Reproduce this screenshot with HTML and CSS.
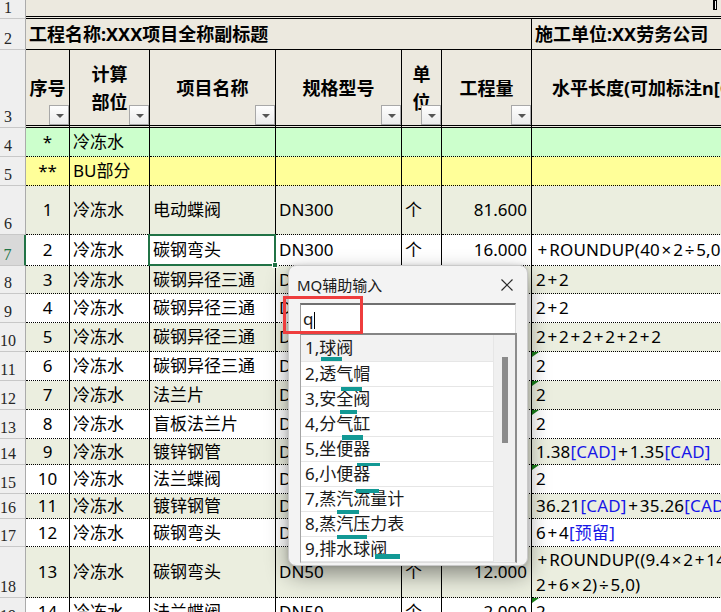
FILE: index.html
```html
<!DOCTYPE html>
<html lang="zh-CN">
<head>
<meta charset="utf-8">
<title>MQ辅助输入</title>
<link rel="stylesheet" href="styles.css">
</head>
<body>
<table class="sheet">
<colgroup>
<col class="w-rh"><col class="w-a"><col class="w-b"><col class="w-c"><col class="w-d"><col class="w-e"><col class="w-f"><col class="w-g">
</colgroup>
<tbody>
<tr class="h18"><td class="rh">1</td><td class="hd row1" colspan="7"><span class="mark"></span></td></tr>
<tr class="h31"><td class="rh">2</td><td class="hd row2" colspan="6">工程名称:XXX项目全称副标题</td><td class="hd row2">施工单位:XX劳务公司</td></tr>
<tr class="h78"><td class="rh">3</td>
<td class="hd row3">序号<span class="fb"></span></td>
<td class="hd row3">计算<br>部位<span class="fb"></span></td>
<td class="hd row3">项目名称<span class="fb"></span></td>
<td class="hd row3">规格型号<span class="fb"></span></td>
<td class="hd row3">单<br>位<span class="fb"></span></td>
<td class="hd row3">工程量<span class="fb"></span></td>
<td class="hd row3 gh">水平长度(可加标注n[CAD]/[预留])</td></tr>

<tr class="h29 g"><td class="rh">4</td><td class="c">*</td><td>冷冻水</td><td></td><td></td><td></td><td></td><td class="gx"></td></tr>
<tr class="h29 y"><td class="rh">5</td><td class="c">**</td><td>BU部分</td><td></td><td></td><td></td><td></td><td class="gx"></td></tr>
<tr class="h49 t"><td class="rh">6</td><td class="c">1</td><td>冷冻水</td><td>电动蝶阀</td><td>DN300</td><td>个</td><td class="r">81.600</td><td class="gx"></td></tr>
<tr class="h31 w"><td class="rh sel-rh">7</td><td class="c">2</td><td>冷冻水</td><td class="sel">碳钢弯头<span class="handle"></span></td><td>DN300</td><td>个</td><td class="r">16.000</td><td class="gx"><span class="op">+</span>ROUNDUP(40<span class="op">×</span>2<span class="op">÷</span>5,0)</td></tr>
<tr class="h28 t"><td class="rh">8</td><td class="c">3</td><td>冷冻水</td><td>碳钢异径三通</td><td>DN300×250</td><td>个</td><td class="r">4.000</td><td class="gx">2<span class="op">+</span>2</td></tr>
<tr class="h29 w"><td class="rh">9</td><td class="c">4</td><td>冷冻水</td><td>碳钢异径三通</td><td>DN250×200</td><td>个</td><td class="r">4.000</td><td class="gx">2<span class="op">+</span>2</td></tr>
<tr class="h29 t"><td class="rh">10</td><td class="c">5</td><td>冷冻水</td><td>碳钢异径三通</td><td>DN200×150</td><td>个</td><td class="r">12.000</td><td class="gx">2<span class="op">+</span>2<span class="op">+</span>2<span class="op">+</span>2<span class="op">+</span>2<span class="op">+</span>2</td></tr>
<tr class="h29 w"><td class="rh">11</td><td class="c">6</td><td>冷冻水</td><td>碳钢异径三通</td><td>DN150×100</td><td>个</td><td class="r">2.000</td><td class="gx cm">2</td></tr>
<tr class="h29 t"><td class="rh">12</td><td class="c">7</td><td>冷冻水</td><td>法兰片</td><td>DN100</td><td>片</td><td class="r">2.000</td><td class="gx cm">2</td></tr>
<tr class="h29 w"><td class="rh">13</td><td class="c">8</td><td>冷冻水</td><td>盲板法兰片</td><td>DN100</td><td>片</td><td class="r">2.000</td><td class="gx cm">2</td></tr>
<tr class="h26 t"><td class="rh">14</td><td class="c">9</td><td>冷冻水</td><td>镀锌钢管</td><td>DN80</td><td>m</td><td class="r">2.730</td><td class="gx">1.38<span class="b">[CAD]</span><span class="op">+</span>1.35<span class="b">[CAD]</span></td></tr>
<tr class="h29 w"><td class="rh">15</td><td class="c">10</td><td>冷冻水</td><td>法兰蝶阀</td><td>DN80</td><td>个</td><td class="r">2.000</td><td class="gx cm">2</td></tr>
<tr class="h25 t"><td class="rh">16</td><td class="c">11</td><td>冷冻水</td><td>镀锌钢管</td><td>DN50</td><td>m</td><td class="r">71.470</td><td class="gx">36.21<span class="b">[CAD]</span><span class="op">+</span>35.26<span class="b">[CAD]</span></td></tr>
<tr class="h28 w"><td class="rh">17</td><td class="c">12</td><td>冷冻水</td><td>碳钢弯头</td><td>DN50</td><td>个</td><td class="r">10.000</td><td class="gx">6<span class="op">+</span>4<span class="b">[预留]</span></td></tr>
<tr class="h50 t"><td class="rh">18</td><td class="c">13</td><td>冷冻水</td><td>碳钢弯头</td><td>DN50</td><td>个</td><td class="r">12.000</td><td class="gx two"><span class="op">+</span>ROUNDUP((9.4<span class="op">×</span>2<span class="op">+</span>14.6<span class="op">×</span>2<span class="op">+</span>6.5<span class="op">×</span><br>2<span class="op">+</span>6<span class="op">×</span>2)<span class="op">÷</span>5,0)</td></tr>
<tr class="h29 w"><td class="rh">19</td><td class="c">14</td><td>冷冻水</td><td>法兰蝶阀</td><td>DN50</td><td>个</td><td class="r">2.000</td><td class="gx cm">2</td></tr>
</tbody>
</table>

<div class="dlg">
  <div class="dlg-title">
    <span>MQ辅助输入</span>
    <svg width="12" height="12" viewBox="0 0 12 12"><path d="M0.5 0.5 L11.5 11.5 M11.5 0.5 L0.5 11.5" stroke="#2a2a2a" stroke-width="1.2" fill="none"/></svg>
  </div>
  <div class="dlg-input"><span>q</span><i class="caret"></i></div>
  <div class="dlg-list">
    <ul class="items">
      <li class="first">1,球阀</li>
      <li>2,透气帽</li>
      <li>3,安全阀</li>
      <li>4,分气缸</li>
      <li>5,坐便器</li>
      <li>6,小便器</li>
      <li>7,蒸汽流量计</li>
      <li>8,蒸汽压力表</li>
      <li>9,排水球阀</li>
    </ul>
    <div class="track"><div class="thumb"></div></div>
    <i class="mk m1"></i><i class="mk m2"></i><i class="mk m3"></i>
    <i class="mk m4"></i><i class="mk m5"></i><i class="mk m6"></i>
    <i class="mk m7"></i><i class="mk m8"></i><i class="mk m9"></i>
  </div>
</div>
<div class="annot"></div>
</body>
</html>
```

FILE: styles.css
```css
html, body {
  margin: 0;
  padding: 0;
}
body {
  width: 721px;
  height: 612px;
  overflow: hidden;
  position: relative;
  background: #ffffff;
  font-family: "Noto Sans", "Noto Sans CJK SC", sans-serif;
  color: #000;
}

/* ---------- sheet ---------- */
.sheet {
  border-collapse: separate;
  border-spacing: 0;
  table-layout: fixed;
  width: 832px;
}
.w-rh { width: 26px; }
.w-a { width: 44px; }
.w-b { width: 80px; }
.w-c { width: 126px; }
.w-d { width: 126px; }
.w-e { width: 40px; }
.w-f { width: 90px; }
.w-g { width: 300px; }

.sheet td {
  box-sizing: border-box;
  padding: 0 3px;
  border-right: 1px solid #000;
  border-bottom: 1px dotted #000;
  font-family: "Noto Sans", "Noto Sans CJK SC", sans-serif;
  font-size: 17px;
  line-height: 22px;
  white-space: nowrap;
  vertical-align: middle;
  text-align: left;
}

.h18 { height: 18px; }
.h25 { height: 25px; }
.h26 { height: 26px; }
.h28 { height: 28px; }
.h29 { height: 29px; }
.h31 { height: 31px; }
.h49 { height: 49px; }
.h50 { height: 50px; }
.h78 { height: 78px; }

.sheet .g td { background: #ccffcc; }
.sheet .y td { background: #ffff99; }
.sheet .t td { background: #ebeedf; }
.sheet .w td { background: #ffffff; }

.sheet td.c { text-align: center; }
.sheet td.r { text-align: right; padding-right: 4px; }
.sheet td.gx { padding-left: 4px; letter-spacing: 0.2px; }
.sheet td.two { line-height: 25px; }
.b { color: #1717e8; }
.op { margin: 0 1.6px; }

/* header rows */
.sheet td.hd {
  background: #ece9df;
  font-weight: bold;
  font-size: 18px;
}
.sheet td.row1 {
  border-right: 0;
  border-bottom: 3px double #000;
  vertical-align: top;
  padding: 0 0 0 687px;
  line-height: 10px;
  font-size: 0;
}
.mark {
  display: inline-block;
  width: 1px;
  height: 8px;
  border: 1px solid #000;
  border-left-width: 2px;
  background: #f4f4f4;
}
.sheet td.row2 {
  border-bottom: 1px solid #000;
  line-height: 24px;
}
.sheet td.row3 {
  border-bottom: 3px double #000;
  text-align: center;
  line-height: 28px;
  position: relative;
}
.sheet td.gh {
  text-align: left;
  padding-left: 20px;
}

/* filter button */
.fb {
  position: absolute;
  right: 0;
  bottom: 0;
  width: 20px;
  height: 20px;
  box-sizing: border-box;
  border: 1px solid #a8a8a8;
  background: linear-gradient(#fefefe, #ebebeb);
}
.fb::after {
  content: "";
  position: absolute;
  left: 6px;
  top: 8px;
  border-left: 4px solid transparent;
  border-right: 4px solid transparent;
  border-top: 4px solid #555;
}

/* row headers */
.sheet tr td.rh {
  background: #efefef;
  border-right: 1px solid #ababab;
  border-bottom: 1px solid #c8c8c8;
  font-family: "Liberation Serif", serif;
  font-weight: normal;
  font-size: 16px;
  line-height: 16px;
  color: #262626;
  text-align: center;
  vertical-align: bottom;
  padding: 0 9px 2px 0;
}
.sheet tr td.sel-rh {
  background: #d9d9d9;
  color: #217346;
  border-right: 2px solid #217346;
}

/* selected cell */
.sheet td.sel {
  position: relative;
}
.sheet td.sel::after {
  content: "";
  position: absolute;
  left: -2px;
  top: -1px;
  right: -1px;
  bottom: -1px;
  border: 2px solid #217346;
}
.handle {
  position: absolute;
  right: -3px;
  bottom: -3px;
  width: 4px;
  height: 4px;
  background: #217346;
  border: 1px solid #fff;
  z-index: 2;
}

/* comment marker */
.sheet td.cm { position: relative; }
.sheet td.cm::before {
  content: "";
  position: absolute;
  left: 0;
  top: 0;
  border-top: 5px solid #187d18;
  border-right: 7px solid transparent;
}

/* ---------- dialog ---------- */
.dlg {
  position: absolute;
  left: 288px;
  top: 265px;
  width: 240px;
  height: 301px;
  box-sizing: border-box;
  background: #f3f3f3;
  border: 1px solid #c9c9c9;
  border-radius: 8px;
  box-shadow: 0 9px 22px rgba(0, 0, 0, 0.42), 0 0 4px rgba(0, 0, 0, 0.12);
  padding: 0 10px 0 11px;
  color: #1a1a1a;
  z-index: 5;
}
.dlg-title {
  height: 37px;
  display: flex;
  align-items: center;
  justify-content: space-between;
  font-size: 15px;
}
.dlg-title span { margin-left: -3px; }
.dlg-title svg { margin-right: 4px; display: block; }

.dlg-input {
  width: 216px;
  height: 30px;
  box-sizing: border-box;
  background: #fff;
  border-top: 2px solid #707070;
  border-left: 1px solid #999;
  border-right: 1px solid #d9d9d9;
  display: flex;
  align-items: center;
  padding-left: 2px;
  font-size: 17px;
  line-height: 20px;
}
.caret {
  display: block;
  width: 1px;
  height: 17px;
  background: #000;
  margin: 3px 0 0 1px;
}

.dlg-list {
  width: 217px;
  height: 230px;
  box-sizing: border-box;
  background: #fff;
  border-top: 2px solid #858585;
  border-left: 1px solid #a3a3a3;
  border-right: 2px solid #8c8c8c;
  border-bottom: 1px solid #dedede;
  display: flex;
  position: relative;
}
.items {
  list-style: none;
  margin: 0;
  padding: 0;
  width: 192px;
  flex: none;
}
.items li {
  height: 25px;
  box-sizing: border-box;
  border-bottom: 1px solid #e6e6e6;
  padding-left: 4px;
  font-size: 17px;
  line-height: 24px;
  white-space: nowrap;
}
.items li.first {
  height: 27px;
  line-height: 26px;
  background: #f2f2f2;
}
.track {
  flex: 1;
  background: #f0f0f0;
  border-left: 1px solid #e6e6e6;
  padding-top: 22px;
}
.thumb {
  width: 6px;
  height: 86px;
  margin-left: 8px;
  background: #8b8b8b;
}

.mk {
  position: absolute;
  display: block;
  height: 4px;
  background: #129995;
}
.m1 { left: 20px; top: 22px; width: 21px; }
.m2 { left: 40px; top: 52px; width: 21px; }
.m3 { left: 39px; top: 75px; width: 17px; }
.m4 { left: 41px; top: 100px; width: 21px; height: 5px; }
.m5 { left: 56px; top: 128px; width: 23px; height: 3px; }
.m6 { left: 55px; top: 154px; width: 23px; }
.m7 { left: 36px; top: 175px; width: 22px; }
.m8 { left: 36px; top: 200px; width: 30px; }
.m9 { left: 74px; top: 219px; width: 25px; height: 5px; }

/* annotation */
.annot {
  position: absolute;
  left: 283px;
  top: 296px;
  width: 80px;
  height: 38px;
  box-sizing: border-box;
  border: 3px solid #ee3d3d;
  z-index: 6;
}
```
